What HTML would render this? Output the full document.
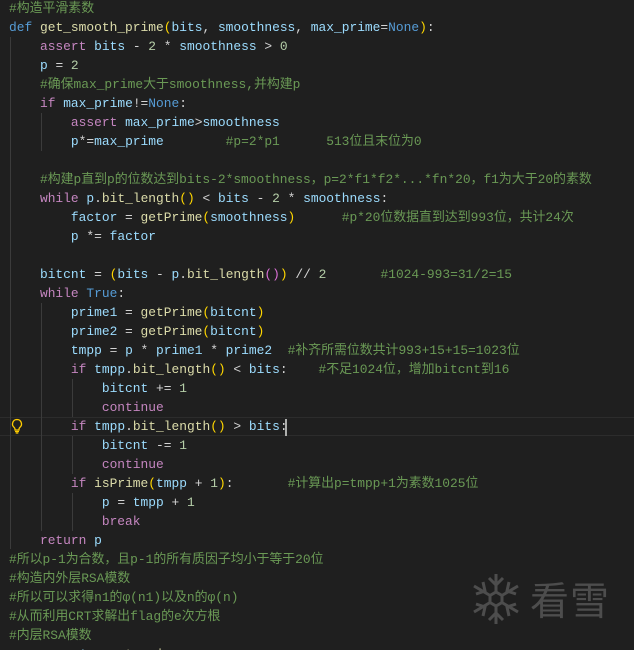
<!DOCTYPE html>
<html><head><meta charset="utf-8"><style>
html,body{margin:0;padding:0;background:#1f1f1f;width:634px;height:650px;overflow:hidden;position:relative}
.code{position:absolute;left:9px;top:-1px;font-family:"Liberation Mono","Noto Sans CJK SC",monospace;font-size:12.9px;color:#d4d4d4}
.l{height:19px;line-height:19px;white-space:pre}
.k{color:#569cd6}.c{color:#c586c0}.f{color:#dcdcaa}.v{color:#9cdcfe}.n{color:#b5cea8}.m{color:#6a9955}.p{color:#ffd700}.q{color:#da70d6}
.g{position:absolute;width:1px;background:#3b3b3b}
.hl{position:absolute;left:0;right:0;top:417px;height:19px;border-top:1px solid #2c2c2c;border-bottom:1px solid #2c2c2c;box-sizing:border-box}
.cur{position:absolute;left:285px;top:419px;width:2px;height:17px;background:#aeafad}
.wm{position:absolute;left:530px;top:574px;font-family:"Noto Sans CJK SC",sans-serif;font-size:39px;color:#4d4d4d;letter-spacing:1px;line-height:50px}
</style></head><body>
<div class="hl"></div>
<div class="g" style="left:10px;top:37px;height:512px"></div>
<div class="g" style="left:41px;top:113px;height:38px"></div>
<div class="g" style="left:41px;top:303px;height:228px"></div>
<div class="g" style="left:72px;top:379px;height:38px"></div>
<div class="g" style="left:72px;top:436px;height:38px"></div>
<div class="g" style="left:72px;top:493px;height:38px"></div>
<div class="cur"></div>
<svg style="position:absolute;left:10px;top:418px" width="14" height="16" viewBox="0 0 14 16"><path d="M7 1.5a4.5 4.5 0 0 0-2.8 8c.6.5.8 1.1.8 1.8V12h4v-.7c0-.7.2-1.3.8-1.8A4.5 4.5 0 0 0 7 1.5z" fill="none" stroke="#ffcc00" stroke-width="1.3"/><path d="M5 13.5h4M5.7 15h2.6" stroke="#ffcc00" stroke-width="1.2"/></svg>
<div class="code">
<div class="l"><span class="m">#构造平滑素数</span></div>
<div class="l"><span class="k">def</span> <span class="f">get_smooth_prime</span><span class="p">(</span><span class="v">bits</span>, <span class="v">smoothness</span>, <span class="v">max_prime</span>=<span class="k">None</span><span class="p">)</span>:</div>
<div class="l">    <span class="c">assert</span> <span class="v">bits</span> - <span class="n">2</span> * <span class="v">smoothness</span> &gt; <span class="n">0</span></div>
<div class="l">    <span class="v">p</span> = <span class="n">2</span></div>
<div class="l">    <span class="m">#确保max_prime大于smoothness,并构建p</span></div>
<div class="l">    <span class="c">if</span> <span class="v">max_prime</span>!=<span class="k">None</span>:</div>
<div class="l">        <span class="c">assert</span> <span class="v">max_prime</span>&gt;<span class="v">smoothness</span></div>
<div class="l">        <span class="v">p</span>*=<span class="v">max_prime</span>        <span class="m">#p=2*p1      513位且末位为0</span></div>
<div class="l"> </div>
<div class="l">    <span class="m">#构建p直到p的位数达到bits-2*smoothness，p=2*f1*f2*...*fn*20，f1为大于20的素数</span></div>
<div class="l">    <span class="c">while</span> <span class="v">p</span>.<span class="f">bit_length</span><span class="p">()</span> &lt; <span class="v">bits</span> - <span class="n">2</span> * <span class="v">smoothness</span>:</div>
<div class="l">        <span class="v">factor</span> = <span class="f">getPrime</span><span class="p">(</span><span class="v">smoothness</span><span class="p">)</span>      <span class="m">#p*20位数据直到达到993位，共计24次</span></div>
<div class="l">        <span class="v">p</span> *= <span class="v">factor</span></div>
<div class="l"> </div>
<div class="l">    <span class="v">bitcnt</span> = <span class="p">(</span><span class="v">bits</span> - <span class="v">p</span>.<span class="f">bit_length</span><span class="q">()</span><span class="p">)</span> // <span class="n">2</span>       <span class="m">#1024-993=31/2=15</span></div>
<div class="l">    <span class="c">while</span> <span class="k">True</span>:</div>
<div class="l">        <span class="v">prime1</span> = <span class="f">getPrime</span><span class="p">(</span><span class="v">bitcnt</span><span class="p">)</span></div>
<div class="l">        <span class="v">prime2</span> = <span class="f">getPrime</span><span class="p">(</span><span class="v">bitcnt</span><span class="p">)</span></div>
<div class="l">        <span class="v">tmpp</span> = <span class="v">p</span> * <span class="v">prime1</span> * <span class="v">prime2</span>  <span class="m">#补齐所需位数共计993+15+15=1023位</span></div>
<div class="l">        <span class="c">if</span> <span class="v">tmpp</span>.<span class="f">bit_length</span><span class="p">()</span> &lt; <span class="v">bits</span>:    <span class="m">#不足1024位，增加bitcnt到16</span></div>
<div class="l">            <span class="v">bitcnt</span> += <span class="n">1</span></div>
<div class="l">            <span class="c">continue</span></div>
<div class="l">        <span class="c">if</span> <span class="v">tmpp</span>.<span class="f">bit_length</span><span class="p">()</span> &gt; <span class="v">bits</span>:</div>
<div class="l">            <span class="v">bitcnt</span> -= <span class="n">1</span></div>
<div class="l">            <span class="c">continue</span></div>
<div class="l">        <span class="c">if</span> <span class="f">isPrime</span><span class="p">(</span><span class="v">tmpp</span> + <span class="n">1</span><span class="p">)</span>:       <span class="m">#计算出p=tmpp+1为素数1025位</span></div>
<div class="l">            <span class="v">p</span> = <span class="v">tmpp</span> + <span class="n">1</span></div>
<div class="l">            <span class="c">break</span></div>
<div class="l">    <span class="c">return</span> <span class="v">p</span></div>
<div class="l"><span class="m">#所以p-1为合数，且p-1的所有质因子均小于等于20位</span></div>
<div class="l"><span class="m">#构造内外层RSA模数</span></div>
<div class="l"><span class="m">#所以可以求得n1的φ(n1)以及n的φ(n)</span></div>
<div class="l"><span class="m">#从而利用CRT求解出flag的e次方根</span></div>
<div class="l"><span class="m">#内层RSA模数</span></div>
<div class="l">        <span class="v">p1</span> = <span class="f">get_prime</span></div>
</div>
<svg style="position:absolute;left:470px;top:572px" width="52" height="54" viewBox="0 0 52 54" fill="none" stroke="#4d4d4d" stroke-width="3"><path d="M26 2v50M4 14l44 26M4 40l44-26"/><path d="M19 6l7 7 7-7M19 48l7-7 7 7M6 22l9-3-2-9M46 32l-9 3 2 9M6 32l9 3-2 9M46 22l-9-3 2-9"/><polygon points="26,20 32,23.5 32,30.5 26,34 20,30.5 20,23.5" fill="#1f1f1f"/></svg>
<div class="wm">看雪</div>
</body></html>
